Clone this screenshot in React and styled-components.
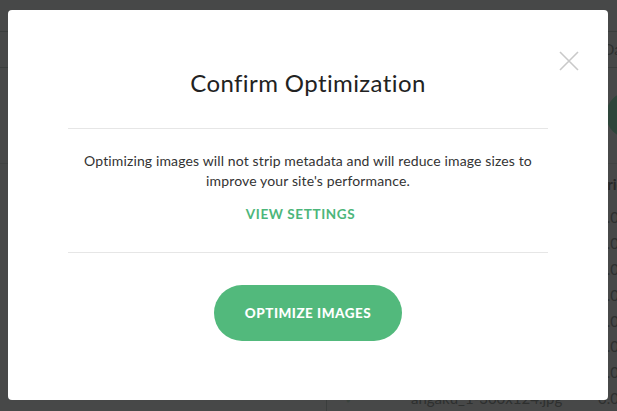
import React from 'react';
import styled, { createGlobalStyle } from 'styled-components';

const GlobalStyle = createGlobalStyle`
  html, body {
    margin: 0;
    padding: 0;
    background: #ffffff;
  }
  body {
    font-family: Lato, 'Open Sans', sans-serif;
    -webkit-font-smoothing: antialiased;
  }
`;

const Page = styled.div`
  position: relative;
  width: 617px;
  height: 411px;
  overflow: hidden;
  background: #ffffff;
  display: flex;
  flex-direction: column;
  font-size: 13px;
  color: #a4a8a6;
`;

const TopBar = styled.div`
  height: 32px;
  border-bottom: 1px solid #d4dad7;
`;

const Toolbar = styled.div`
  height: 35px;
  display: flex;
  align-items: center;
  padding-left: 603px;
  border-bottom: 1px solid #d4dad7;
  font-size: 15px;
  white-space: nowrap;
`;

const Actions = styled.div`
  height: 98px;
  display: flex;
  align-items: center;
  padding-left: 606px;
  border-bottom: 1px solid #e8ecea;
`;

const PillButton = styled.div`
  flex: none;
  width: 120px;
  height: 46px;
  border-radius: 23px;
  background: #a6f5cb;
`;

const TableRow = styled.div`
  display: grid;
  grid-template-columns: 326px 72px 200px 1fr;
  height: ${p => (p.head ? '41px' : '26.4px')};
  align-items: center;
  font-weight: ${p => (p.head ? 700 : 400)};
  color: ${p => (p.head ? '#8a8d8b' : '#a4a8a6')};
  font-size: 15px;
  white-space: nowrap;
`;

const Cell = styled.div`
  height: 100%;
  display: flex;
  align-items: center;
  padding-left: ${p => p.pad || 0}px;
  border-left: ${p => (p.line ? '1px solid #d4dad7' : 'none')};
  overflow: hidden;
`;

const Check = styled.span`
  color: #cfe9d8;
  font-size: 16px;
`;

const Overlay = styled.div`
  position: absolute;
  inset: 0;
  background: rgba(0, 2, 1, 0.72);
`;

const Modal = styled.div`
  position: absolute;
  left: 8px;
  top: 10px;
  width: 600px;
  height: 390px;
  box-sizing: border-box;
  padding: 0 60px;
  background: #ffffff;
  border-radius: 4px;
  display: flex;
  flex-direction: column;
  text-align: center;
  font-family: Lato, 'Open Sans', sans-serif;
`;

const CloseButton = styled.button`
  position: absolute;
  top: 41px;
  right: 29px;
  width: 20px;
  height: 20px;
  padding: 0;
  border: none;
  background: none;
  cursor: pointer;
  display: flex;
  align-items: center;
  justify-content: center;
`;

const Header = styled.div`
  padding: 58px 0 30px;
  border-bottom: 1px solid #e6e6e6;
`;

const Title = styled.h2`
  margin: 0;
  font-size: 24px;
  line-height: 30px;
  font-weight: 400;
  letter-spacing: 0.4px;
  color: #222222;
`;

const Body = styled.div`
  padding: 22px 0 30px;
  border-bottom: 1px solid #e6e6e6;
`;

const Text = styled.p`
  margin: 0;
  font-size: 14px;
  line-height: 20px;
  letter-spacing: 0.13px;
  color: #333333;
`;

const LinkButton = styled.a`
  display: inline-block;
  margin: 15px 15px 0 0;
  font-size: 13.5px;
  line-height: 16px;
  font-weight: 700;
  letter-spacing: 0.6px;
  color: #4cb67a;
  text-decoration: none;
  cursor: pointer;
`;

const Footer = styled.div`
  padding-top: 32px;
  display: flex;
  justify-content: center;
`;

const PrimaryButton = styled.button`
  width: 188px;
  height: 56px;
  border: none;
  border-radius: 28px;
  background: #52b97c;
  color: #ffffff;
  font-family: inherit;
  font-size: 13.5px;
  font-weight: 900;
  letter-spacing: 0.5px;
  cursor: pointer;
`;

const rows = Array.from({ length: 8 }, (_, i) => i);

const App = () => (
  <>
    <GlobalStyle />
    <Page>
      <TopBar />
      <Toolbar>Date</Toolbar>
      <Actions>
        <PillButton />
      </Actions>
      <TableRow head>
        <Cell />
        <Cell />
        <Cell />
        <Cell>Price</Cell>
      </TableRow>
      {rows.map(i => (
        <TableRow key={i}>
          <Cell />
          <Cell line pad={17}>
            {i === 7 && <Check>✓</Check>}
          </Cell>
          <Cell pad={13}>{i === 7 ? 'angaku_1-300x124.jpg' : ''}</Cell>
          <Cell>0.00</Cell>
        </TableRow>
      ))}
      <Overlay />
      <Modal>
        <CloseButton aria-label="Close">
          <svg width="20" height="20" viewBox="0 0 20 20">
            <path d="M1 1 L19 19 M19 1 L1 19" stroke="#c9c9c9" strokeWidth="1.6" fill="none" />
          </svg>
        </CloseButton>
        <Header>
          <Title>Confirm Optimization</Title>
        </Header>
        <Body>
          <Text>
            Optimizing images will not strip metadata and will reduce image sizes to
            <br />
            improve your site's performance.
          </Text>
          <LinkButton>VIEW SETTINGS</LinkButton>
        </Body>
        <Footer>
          <PrimaryButton>OPTIMIZE IMAGES</PrimaryButton>
        </Footer>
      </Modal>
    </Page>
  </>
);

export default App;
